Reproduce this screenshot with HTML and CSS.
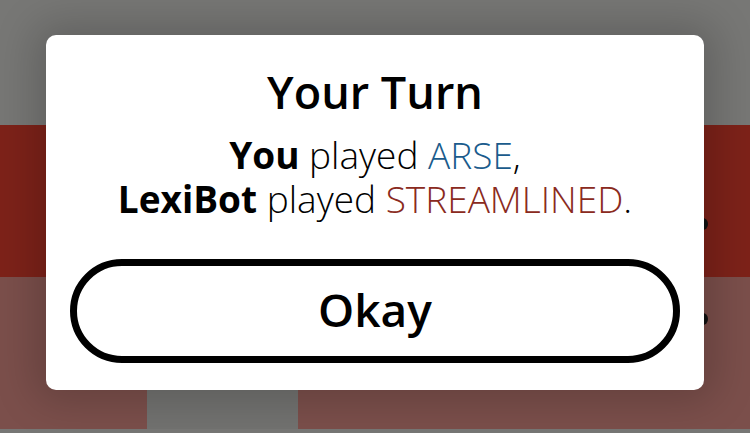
FILE: index.html
```html
<!DOCTYPE html>
<html>
<head>
<meta charset="utf-8">
<link rel="stylesheet" href="styles.css">
</head>
<body>
<div class="board">
  <div class="band band-top"></div>
  <div class="band band-red"></div>
  <div class="band band-row">
    <div class="cell cell-a"></div>
    <div class="cell cell-gap"></div>
    <div class="cell cell-b"></div>
  </div>
  <div class="band band-bottom"></div>
  <span class="peek peek-1"></span>
  <span class="peek peek-2"></span>
</div>
<div class="dialog">
  <h1 class="title">Your Turn</h1>
  <p class="msg"><span class="line"><b>You</b> played <span class="word-you">ARSE</span>,</span><span class="line"><b>LexiBot</b> played <span class="word-bot">STREAMLINED</span>.</span></p>
  <button class="okay">Okay</button>
</div>
</body>
</html>
```
FILE: styles.css
```css
html, body {
  margin: 0;
  padding: 0;
  width: 750px;
  height: 433px;
  overflow: hidden;
  font-family: "Open Sans", "Noto Sans", sans-serif;
}
.board {
  position: relative;
  display: flex;
  flex-direction: column;
  width: 750px;
  height: 433px;
}
.band-top {
  height: 125px;
  background: #777775;
}
.band-red {
  height: 152px;
  background: #7d2219;
}
.band-row {
  height: 152px;
  display: flex;
}
.cell-a {
  width: 147px;
  background: #7b4f4b;
}
.cell-gap {
  width: 151px;
  background: #727270;
}
.cell-b {
  flex: 1;
  background: #7b4f4b;
}
.band-bottom {
  flex: 1;
  background: #777775;
}
.peek {
  position: absolute;
  left: 698px;
  width: 10px;
  height: 12px;
  border-radius: 50%;
  background: #111;
}
.peek-1 { top: 218px; }
.peek-2 { top: 313px; }
.dialog {
  position: absolute;
  left: 46px;
  top: 35px;
  width: 658px;
  height: 355px;
  box-sizing: border-box;
  padding: 26px 24px 0;
  background: #fff;
  border-radius: 10px;
  box-shadow: 0 0 40px 12px rgba(0, 0, 0, 0.18);
  display: flex;
  flex-direction: column;
  align-items: center;
}
.title {
  margin: 0;
  font-size: 45px;
  font-weight: 600;
  line-height: 62px;
  color: #000;
}
.msg {
  margin: 10px 0 0;
  font-size: 37px;
  font-weight: 300;
  line-height: 44px;
  text-align: center;
  color: #000;
  white-space: nowrap;
  display: flex;
  flex-direction: column;
  align-items: center;
}
.line {
  display: block;
  height: 44px;
}
.msg b {
  font-weight: 700;
}
.word-you { color: #1a5b8c; }
.word-bot { color: #8a2a20; }
.okay {
  margin-top: 38px;
  width: 610px;
  height: 104px;
  box-sizing: border-box;
  border: 7px solid #000;
  border-radius: 52px;
  background: #fff;
  font-family: "Open Sans", "Noto Sans", sans-serif;
  font-size: 46px;
  font-weight: 600;
  color: #000;
  padding: 0 0 4px;
}
```
